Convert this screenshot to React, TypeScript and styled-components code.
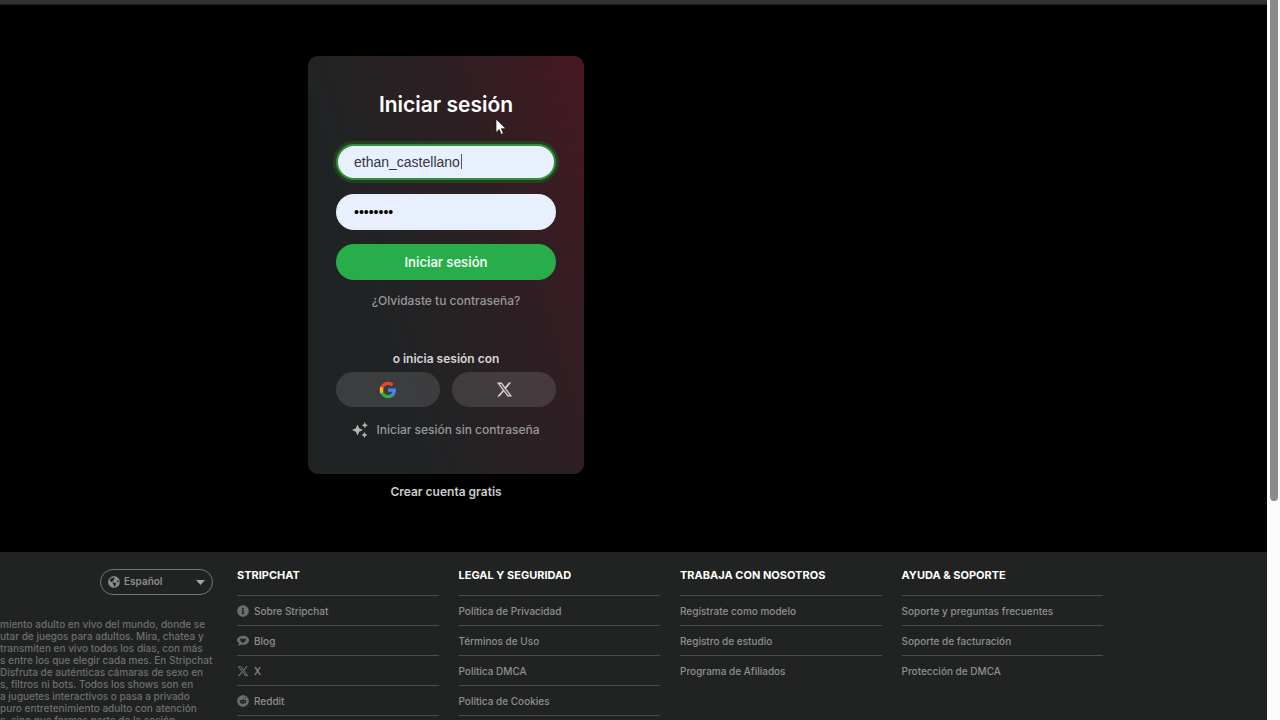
import React from "react";
import styled, { createGlobalStyle, css } from "styled-components";
import { FaGlobeAmericas, FaInfoCircle, FaReddit } from "react-icons/fa";
import { FaXTwitter } from "react-icons/fa6";

const GlobalStyle = createGlobalStyle`
  * { box-sizing: border-box; }
  body {
    margin: 0;
    background: #000;
    font-family: Inter, "Liberation Sans", sans-serif;
  }
  h1, h2, p, ul { margin: 0; padding: 0; }
  ul { list-style: none; }
  a { color: inherit; text-decoration: none; }
  button, input, select { font-family: inherit; }
`;

const Shell = styled.div`
  display: flex;
  height: 100vh;
  overflow: hidden;
  background: #000;
`;

const Page = styled.div`
  flex: 1;
  min-width: 0;
  display: flex;
  flex-direction: column;
`;

const TopStrip = styled.header`
  flex: none;
  height: 5px;
  background: #323232;
  border-bottom: 1px solid #1c1c1c;
`;

const Main = styled.main`
  flex: none;
  display: flex;
  flex-direction: column;
  align-items: center;
  padding: 51px 375px 52px 0;
`;

const Card = styled.section`
  position: relative;
  width: 276px;
  padding: 32px 28px 36px;
  border-radius: 10px;
  background: linear-gradient(72deg, #202324 30%, #2d1f23 65%, #461822 100%);
  display: flex;
  flex-direction: column;
  align-items: center;
`;

const Title = styled.h1`
  color: #fff;
  font-size: 21px;
  font-weight: 600;
  line-height: 34px;
  margin-bottom: 22px;
`;

const Form = styled.form`
  width: 100%;
  display: flex;
  flex-direction: column;
  gap: 14px;
`;

const Field = styled.label`
  position: relative;
  display: block;
  height: 36px;
`;

const TextInput = styled.input<{ $active?: boolean }>`
  width: 100%;
  height: 36px;
  padding: 0 18px;
  border: 0;
  border-radius: 18px;
  outline: none;
  background: #e8f0fe;
  color: #33363c;
  font-family: "Liberation Sans", Arial, sans-serif;
  font-size: 14px;
  &[type="password"] { color: #000; }
  ${(p) =>
    p.$active &&
    css`
      border: 2px solid #2f8f3a;
      padding: 0 16px;
      box-shadow: 0 0 0 3px #26401f;
    `}
`;

const Caret = styled.span`
  position: absolute;
  top: 10px;
  left: 125px;
  width: 1px;
  height: 15px;
  background: #55585f;
`;

const Submit = styled.button`
  height: 36px;
  padding: 0;
  border: 0;
  border-radius: 18px;
  background: #28ad4b;
  color: #eefbef;
  font-size: 13px;
  font-weight: 600;
`;

const TextLink = styled.a<{ $strong?: boolean }>`
  display: flex;
  align-items: center;
  gap: 8px;
  line-height: 16px;
  font-size: 12px;
  font-weight: ${(p) => (p.$strong ? 600 : 500)};
  color: ${(p) => (p.$strong ? "#cbcbcb" : "#98989a")};
`;

const Forgot = styled.div`
  padding: 13px 0 42px;
`;

const Divider = styled.p`
  color: #d8d5d6;
  font-size: 12px;
  font-weight: 600;
  line-height: 16px;
  margin-bottom: 5px;
`;

const Socials = styled.div`
  width: 100%;
  display: grid;
  grid-template-columns: 1fr 1fr;
  gap: 12px;
  margin-bottom: 15px;
`;

const SocialButton = styled.button`
  height: 35px;
  border: 0;
  border-radius: 18px;
  padding: 0;
  background: rgba(255, 255, 255, 0.12);
  color: #d3cfd0;
  display: flex;
  align-items: center;
  justify-content: center;
`;

const Register = styled.div`
  padding-top: 10px;
`;

const Pointer = styled.svg`
  position: absolute;
  left: 187px;
  top: 62px;
`;

const Footer = styled.footer`
  flex: 1;
  min-height: 0;
  overflow: hidden;
  display: grid;
  grid-template-columns: 213px 1fr;
  gap: 24px;
  padding-right: 164px;
  background: #212322;
`;

const About = styled.div`
  display: flex;
  flex-direction: column;
  padding-top: 17px;
  min-width: 0;
`;

const Language = styled.label`
  position: relative;
  align-self: flex-end;
  width: 113px;
  height: 26px;
  margin-bottom: 23px;
  display: flex;
  align-items: center;
  color: #8c8e8d;
`;

const LanguageSelect = styled.select`
  appearance: none;
  width: 100%;
  height: 26px;
  padding: 0 24px 2px 23px;
  border: 1px solid #747675;
  border-radius: 13px;
  background: transparent;
  color: #8c8e8d;
  font-size: 10px;
  font-weight: 600;
`;

const LanguageIcon = styled.span<{ $side: "left" | "right" }>`
  position: absolute;
  ${(p) => p.$side}: 8px;
  display: flex;
  pointer-events: none;
`;

const Blurb = styled.p`
  color: #6d6f6e;
  font-size: 10px;
  font-weight: 500;
  line-height: 12px;
  white-space: nowrap;
`;

const BlurbLine = styled.span`
  display: block;
`;

const Columns = styled.nav`
  display: grid;
  grid-template-columns: repeat(4, 1fr);
  gap: 20px;
  align-items: start;
`;

const ColumnTitle = styled.h2`
  padding: 15px 0 12px;
  color: #fff;
  font-size: 11px;
  font-weight: 700;
  line-height: 16px;
`;

const Rows = styled.ul<{ $closed: boolean }>`
  border-bottom: ${(p) => (p.$closed ? "1px solid #4a4c4b" : "0")};
`;

const Row = styled.li`
  border-top: 1px solid #4a4c4b;
  height: 30px;
  display: flex;
  align-items: center;
  color: #8e908f;
  font-size: 10px;
  font-weight: 500;
`;

const RowLink = styled.a`
  display: flex;
  align-items: center;
  gap: 5px;
  line-height: 16px;
  svg { color: #6c6e6d; }
`;

const ScrollTrack = styled.aside`
  flex: none;
  width: 13px;
  padding: 0 2px 0 3px;
  background: #fcfcfc;
`;

const ScrollThumb = styled.div`
  height: 501px;
  border-radius: 0 0 4px 4px;
  background: #8b8b8b;
`;

const GoogleLogo = () => (
  <svg width="18" height="18" viewBox="0 0 48 48" aria-hidden="true">
    <path fill="#4285F4" d="M45.1 24.5c0-1.6-.1-3.100-.4-4.500H24v8.500h11.800c-.5 2.800-2.100 5.100-4.400 6.700v5.500h7.100c4.200-3.800 6.600-9.500 6.600-16.200z" />
    <path fill="#34A853" d="M24 46c5.900 0 10.900-2 14.500-5.300l-7.100-5.500c-2 1.300-4.500 2.100-7.400 2.100-5.700 0-10.600-3.900-12.300-9.100H4.300v5.700C7.900 41.100 15.400 46 24 46z" />
    <path fill="#FBBC05" d="M11.700 28.200c-.4-1.300-.7-2.700-.7-4.200s.3-2.900.7-4.200v-5.700H4.300C2.900 17.100 2 20.400 2 24s.9 6.900 2.300 9.900z" />
    <path fill="#EA4335" d="M24 10.700c3.200 0 6.100 1.100 8.400 3.300l6.300-6.300C34.900 4.200 29.900 2 24 2 15.400 2 7.900 6.900 4.300 14.100l7.400 5.700C13.400 14.600 18.300 10.700 24 10.700z" />
  </svg>
);

const Sparkles = () => (
  <svg width="16" height="16" viewBox="0 0 16 16" fill="#b5b3b4" aria-hidden="true">
    <path d="M5.500 2.500l1.700 3.800 3.800 1.700-3.800 1.700-1.700 3.800-1.700-3.800L0 8l3.800-1.700z" />
    <path d="M12.800 0l1 2.200 2.200 1-2.200 1-1 2.200-1-2.200-2.200-1 2.200-1z" />
    <path d="M12.500 10l1 2 2 1-2 1-1 2-1-2-2-1 2-1z" />
  </svg>
);

const BlogIcon = () => (
  <svg width="12" height="12" viewBox="0 0 16 16" aria-hidden="true">
    <path fill="currentColor" fillRule="evenodd" d="M8.500 1C12.700 1 16 3.700 16 7s-3.300 6-7.500 6c-1 0-2-.2-2.800-.4L1 14.500l1.800-3.600C1.100 9.800 0 8.500 0 7c0-3.300 4.300-6 8.500-6zM8 11l3.500-3.500c1.500-1.700-.8-4-2.500-2.500l-1 .9-1-.9C5.300 3.500 3 5.800 4.500 7.500z" />
  </svg>
);

type Entry = { label: string; icon?: React.ReactNode };

const columns: { title: string; entries: Entry[] }[] = [
  {
    title: "STRIPCHAT",
    entries: [
      { label: "Sobre Stripchat", icon: <FaInfoCircle size={12} /> },
      { label: "Blog", icon: <BlogIcon /> },
      { label: "X", icon: <FaXTwitter size={12} /> },
      { label: "Reddit", icon: <FaReddit size={12} /> },
    ],
  },
  {
    title: "LEGAL Y SEGURIDAD",
    entries: [
      { label: "Política de Privacidad" },
      { label: "Términos de Uso" },
      { label: "Política DMCA" },
      { label: "Política de Cookies" },
    ],
  },
  {
    title: "TRABAJA CON NOSOTROS",
    entries: [
      { label: "Regístrate como modelo" },
      { label: "Registro de estudio" },
      { label: "Programa de Afiliados" },
    ],
  },
  {
    title: "AYUDA & SOPORTE",
    entries: [
      { label: "Soporte y preguntas frecuentes" },
      { label: "Soporte de facturación" },
      { label: "Protección de DMCA" },
    ],
  },
];

const blurb = [
  "miento adulto en vivo del mundo, donde se",
  "utar de juegos para adultos. Mira, chatea y",
  "transmiten en vivo todos los días, con más",
  "s entre los que elegir cada mes. En Stripchat",
  "Disfruta de auténticas cámaras de sexo en",
  "s, filtros ni bots. Todos los shows son en",
  "a juguetes interactivos o pasa a privado",
  "puro entretenimiento adulto con atención",
  "s, sino que formas parte de la sesión",
];

export default function App() {
  return (
    <>
      <GlobalStyle />
      <Shell>
        <Page>
          <TopStrip />
          <Main>
            <Card>
              <Title>Iniciar sesión</Title>
              <Form onSubmit={(e) => e.preventDefault()}>
                <Field>
                  <TextInput $active type="text" aria-label="Usuario" defaultValue="ethan_castellano" />
                  <Caret />
                </Field>
                <Field>
                  <TextInput type="password" aria-label="Contraseña" defaultValue="password" />
                </Field>
                <Submit type="submit">Iniciar sesión</Submit>
              </Form>
              <Forgot>
                <TextLink href="#">¿Olvidaste tu contraseña?</TextLink>
              </Forgot>
              <Divider>o inicia sesión con</Divider>
              <Socials>
                <SocialButton type="button" aria-label="Google"><GoogleLogo /></SocialButton>
                <SocialButton type="button" aria-label="X"><FaXTwitter size={17} /></SocialButton>
              </Socials>
              <TextLink href="#"><Sparkles />Iniciar sesión sin contraseña</TextLink>
              <Pointer width="12" height="18" viewBox="0 0 12 18" aria-hidden="true">
                <path d="M1 1v13.500l3.200-3 2 4.800 2.200-.9-2-4.700H11z" fill="#fff" stroke="#1a1214" strokeWidth="0.7" />
              </Pointer>
            </Card>
            <Register>
              <TextLink href="#" $strong>Crear cuenta gratis</TextLink>
            </Register>
          </Main>
          <Footer>
            <About>
              <Language>
                <LanguageIcon $side="left"><FaGlobeAmericas size={12} /></LanguageIcon>
                <LanguageSelect aria-label="Idioma" defaultValue="es">
                  <option value="es">Español</option>
                </LanguageSelect>
                <LanguageIcon $side="right">
                  <svg width="9" height="5" viewBox="0 0 9 5" aria-hidden="true"><path d="M0 0h9L4.500 5z" fill="#a4a6a5" /></svg>
                </LanguageIcon>
              </Language>
              <Blurb>
                {blurb.map((line) => <BlurbLine key={line}>{line}</BlurbLine>)}
              </Blurb>
            </About>
            <Columns aria-label="Pie de página">
              {columns.map((column) => (
                <section key={column.title}>
                  <ColumnTitle>{column.title}</ColumnTitle>
                  <Rows $closed={column.entries.length > 3}>
                    {column.entries.map((entry) => (
                      <Row key={entry.label}>
                        <RowLink href="#">{entry.icon}{entry.label}</RowLink>
                      </Row>
                    ))}
                  </Rows>
                </section>
              ))}
            </Columns>
          </Footer>
        </Page>
        <ScrollTrack aria-hidden="true"><ScrollThumb /></ScrollTrack>
      </Shell>
    </>
  );
}
